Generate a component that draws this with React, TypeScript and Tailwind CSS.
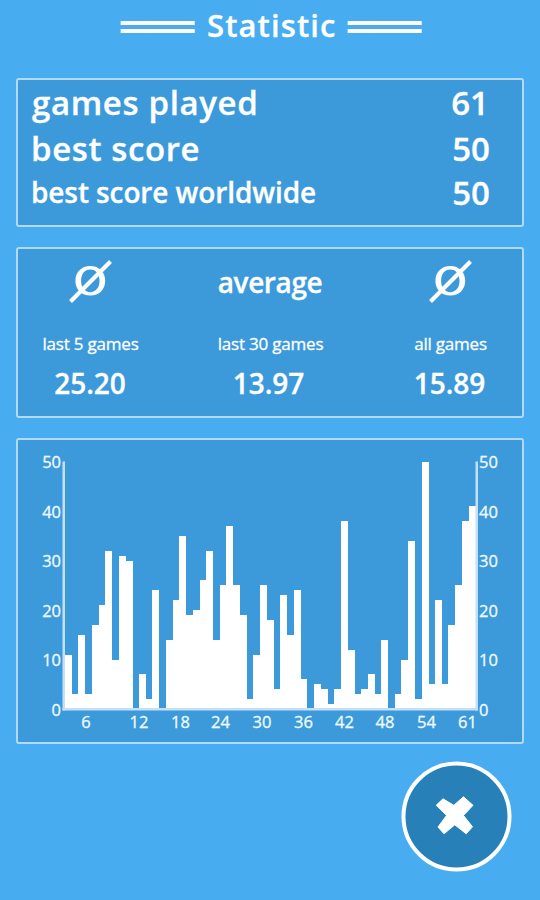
import type { ReactNode } from "react";

const scores = [
  11, 3, 15, 3, 17, 21, 32, 10, 31, 30, 0, 7, 2, 24, 0, 14, 22, 35, 19, 20, 26,
  32, 14, 25, 37, 25, 19, 2, 11, 25, 18, 4, 23, 15, 24, 6, 0, 5, 4, 1, 4, 38,
  12, 3, 4, 7, 3, 14, 0, 3, 10, 34, 2, 50, 5, 22, 5, 17, 25, 38, 41,
];

const yTicks = [0, 10, 20, 30, 40, 50];

const xTicks = [
  { label: "6", x: 68 },
  { label: "12", x: 121 },
  { label: "18", x: 162.5 },
  { label: "24", x: 202.5 },
  { label: "30", x: 244 },
  { label: "36", x: 285.5 },
  { label: "42", x: 326.5 },
  { label: "48", x: 367 },
  { label: "54", x: 408.5 },
  { label: "61", x: 449.5 },
];

const chart = { left: 47, base: 269, step: 6.727, unit: 4.95 };

function Panel({ className, children }: { className: string; children: ReactNode }) {
  return (
    <section
      className={`mx-4 rounded-[3px] border-2 border-[#b3d9f6] bg-[#3c9adb] ${className}`}
    >
      {children}
    </section>
  );
}

function TitleBars() {
  return (
    <span className="mt-[2px] h-[50px] w-[74px] scale-y-[1.17] whitespace-nowrap font-['DejaVu_Sans_Mono',monospace] text-[40.5px] font-normal leading-[50px] [-webkit-text-stroke:0px]">
      ═══
    </span>
  );
}

function AverageIcon() {
  return (
    <svg viewBox="0 0 44 44" className="h-11 w-11" aria-hidden="true">
      <path
        fill="#fff"
        fillRule="evenodd"
        d="M22.3 6c8.900 0 14.900 6.100 14.900 14.800S31.200 35.600 22.300 35.600 7.400 29.500 7.400 20.800 13.400 6 22.300 6zM22.300 9.400c-5.600 0-9.200 4.500-9.200 11.400s3.600 11.400 9.200 11.400 9.200-4.500 9.200-11.400-3.600-11.400-9.200-11.400z"
      />
      <path d="M2.500 41.500 42.500 1.500" stroke="#fff" strokeWidth="4" />
    </svg>
  );
}

function ScoreChart() {
  return (
    <svg viewBox="0 0 504 302" className="block h-[302px] w-[504px]">
      <g fill="#fff" shapeRendering="crispEdges">
        {scores.map((score, i) => (
          <rect
            key={i}
            x={chart.left + i * chart.step}
            y={chart.base - score * chart.unit}
            width={chart.step + 0.3}
            height={score * chart.unit}
          />
        ))}
      </g>
      <g fill="#c3e0f8">
        <rect x="44.500" y="21.500" width="2.500" height="249" />
        <rect x="457.500" y="21.500" width="2.500" height="249" />
        <rect x="44.500" y="268" width="415.500" height="2.500" />
      </g>
      <g fill="#f0fbff" stroke="#f0fbff" strokeWidth="0.300" fontSize="16.500" fontWeight="400">
        {yTicks.map((tick) => {
          const y = 275.5 - tick * chart.unit;
          return (
            <g key={tick}>
              <text x="43" y={y} textAnchor="end">
                {tick}
              </text>
              <text x="461" y={y}>
                {tick}
              </text>
            </g>
          );
        })}
        {xTicks.map((tick) => (
          <text key={tick.label} x={tick.x} y="287.500" textAnchor="middle">
            {tick.label}
          </text>
        ))}
      </g>
    </svg>
  );
}

export default function App() {
  return (
    <main className="flex h-[900px] w-[540px] flex-col overflow-hidden bg-[#48acf0] font-['Open_Sans','Noto_Sans',sans-serif] font-semibold text-white [-webkit-text-stroke:0.3px_white]">
      <h1 className="flex h-[78px] items-start pl-[121px] text-[31px] leading-[50px]">
        <TitleBars />
        <span className="w-[153px] pl-3 tracking-[1.100px]">Statistic</span>
        <TitleBars />
      </h1>

      <Panel className="h-[149px] pl-[13px] pr-8">
        <div className="flex h-[46px] items-center justify-between text-[33px] leading-[46px]">
          <span className="pl-px tracking-[0.650px]">games played</span>
          <span className="pr-px">61</span>
        </div>
        <div className="flex h-[45px] items-center justify-between text-[33px] leading-[45px]">
          <span className="tracking-[0.600px]">best score</span>
          <span>50</span>
        </div>
        <div className="flex h-[44px] items-center justify-between leading-[44px]">
          <span className="pb-[2px] text-[28px] tracking-[-0.100px]">best score worldwide</span>
          <span className="text-[33px]">50</span>
        </div>
      </Panel>

      <Panel className="mt-5 h-[171px]">
        <div className="flex h-[66px] items-center">
          <div className="flex w-36 justify-center">
            <AverageIcon />
          </div>
          <div className="flex-1 text-center text-[28px] tracking-[-0.400px]">average</div>
          <div className="flex w-36 justify-center">
            <AverageIcon />
          </div>
        </div>
        <div className="flex h-[58px] items-center text-[17px] font-normal tracking-[-0.200px]">
          <div className="w-36 pl-px text-center">last 5 games</div>
          <div className="flex-1 pl-px text-center">last 30 games</div>
          <div className="w-36 pl-px text-center">all games</div>
        </div>
        <div className="flex h-5 items-center text-[28px]">
          <div className="w-36 text-center">25.20</div>
          <div className="flex-1 pr-[3px] text-center">13.97</div>
          <div className="w-36 pr-px text-center">15.89</div>
        </div>
      </Panel>

      <Panel className="mt-5 h-[306px]">
        <ScoreChart />
      </Panel>

      <div className="mr-7 mt-[17px] flex justify-end">
        <button type="button" aria-label="Close" className="h-[111px] w-[111px]">
          <svg viewBox="0 0 111 111" className="h-full w-full">
            <circle cx="55.500" cy="55.500" r="53" fill="#2880b9" stroke="#fff" strokeWidth="4" />
            <path
              fill="#fff"
              stroke="#fff"
              strokeLinejoin="round"
              d="M42 37.800 52.800 44.300 62.500 35.800 72 44.300 62.500 54.500 71.500 65.800 65.200 72.800 53.800 63.800 43 72.800 37 66 45.500 54.500 35.200 44.300z"
            />
          </svg>
        </button>
      </div>
    </main>
  );
}
